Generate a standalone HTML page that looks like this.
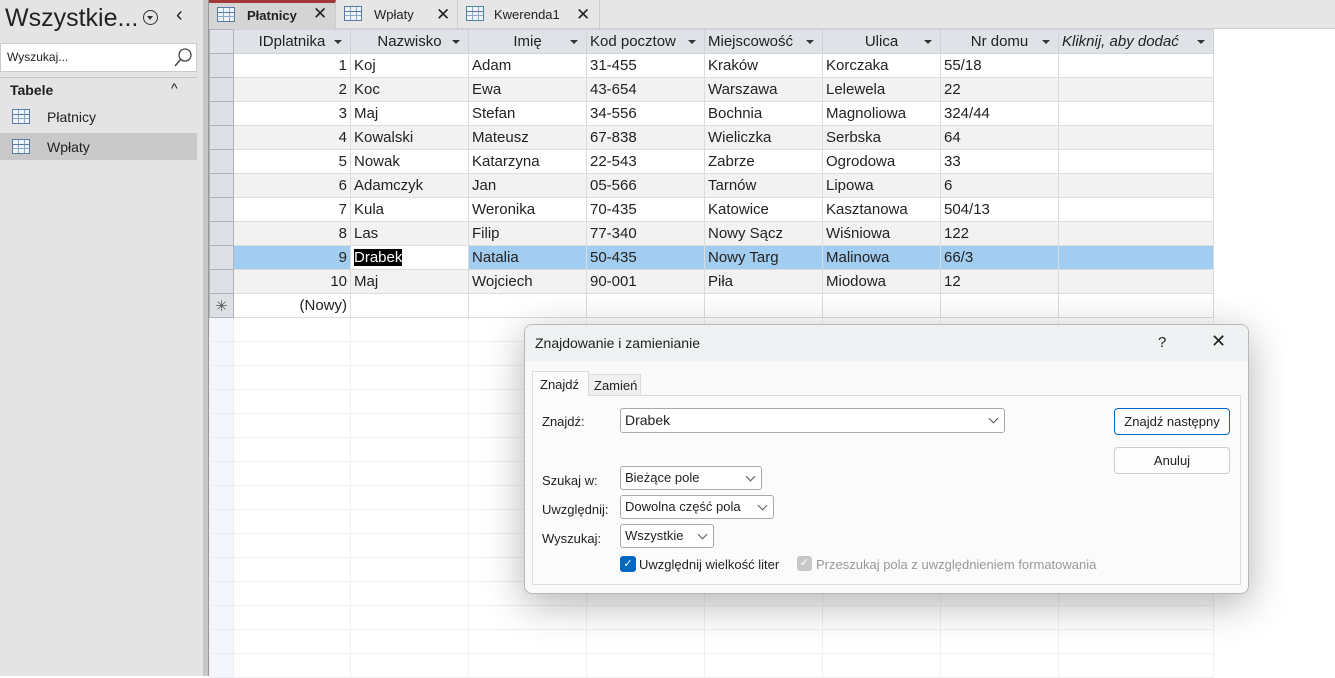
<!DOCTYPE html>
<html><head><meta charset="utf-8"><style>
*{box-sizing:border-box;margin:0;padding:0}
body{width:1335px;height:676px;overflow:hidden;background:#fff;font-family:"Liberation Sans",sans-serif;position:relative;color:#222}
.a{position:absolute}
#left{left:0;top:0;width:203px;height:676px;background:#e4e4e4}
#split{left:203px;top:0;width:6px;height:676px;background:#c8c8c8;border-right:1px solid #999}
#tabs{left:209px;top:0;width:1126px;height:29px;background:#e6e6e6;border-bottom:1px solid #d0d0d0}
.tab{position:absolute;top:0;height:29px;font-size:13px;line-height:29px;border-right:1px solid #ccc}
.ti{position:absolute;left:8px;top:6px;width:18px;height:15px;border:1px solid #5a7aa8;background:
linear-gradient(#5a7aa8,#5a7aa8) 0 4px/100% 1px no-repeat,
linear-gradient(#8fa8c8,#8fa8c8) 0 8px/100% 1px no-repeat,
linear-gradient(90deg,transparent 5px,#8fa8c8 5px,#8fa8c8 6px,transparent 6px,transparent 11px,#8fa8c8 11px,#8fa8c8 12px,transparent 12px),#eef3fa}
.x{position:absolute;font-size:17px;top:0}
table{position:absolute;left:209px;top:29px;border-collapse:collapse;table-layout:fixed;font-size:15px}
td{height:24px;border:1px solid #dcdcdc;padding:0 3px;white-space:nowrap;overflow:hidden}
tr.h td{background:#dfe3e8;text-align:center;position:relative;border-color:#cfd3d8}
tr.h td i.d{position:absolute;right:8px;top:10px;border:4px solid transparent;border-top:4px solid #333;border-bottom:0}
tr.e td{background:#f2f2f2}
tr.sel td{background:#a3cdf0}
tr.z td{border-color:#f0f0f3}
tr td.s{background:#dde0e5;border-color:#b0b4ba;padding:0}
tr.z td.s{background:#f5f6fc;border-color:#ebecf2}
td.r{text-align:right}
#dlg{left:524px;top:324px;width:725px;height:270px;border:1px solid #b8b8b8;border-radius:8px;background:#f9f9f9;box-shadow:0 10px 40px rgba(0,0,0,.3);overflow:hidden;font-size:13px}
.sel2{position:absolute;background:#fff;border:1px solid #aaa;border-radius:3px;height:24px;line-height:22px;padding-left:4px;font-size:13px}
.sel2 b{position:absolute;right:7px;top:6px;width:7px;height:7px;border-right:1px solid #555;border-bottom:1px solid #555;transform:rotate(45deg)}
.btn{position:absolute;left:589px;width:116px;height:27px;border:1px solid #ccc;border-radius:4px;background:#fdfdfd;text-align:center;line-height:25px}
.lbl{position:absolute;left:17px}
</style></head><body>
<div id="left" class="a">
<div class="a" style="left:5px;top:4px;font-size:25px;color:#222">Wszystkie...</div>
<div class="a" style="left:143px;top:10px;width:15px;height:15px;border:1px solid #333;border-radius:50%"><div class="a" style="left:3px;top:5px;border:3px solid transparent;border-top:4px solid #333;border-bottom:0"></div></div>
<div class="a" style="left:176px;top:4px;font-size:20px">‹</div>
<div class="a" style="left:0;top:43px;width:197px;height:29px;background:#fff;border:1px solid #ccc;font-size:12px;line-height:27px;padding-left:6px">Wyszukaj...</div>
<svg class="a" style="left:172px;top:47px" width="22" height="22"><circle cx="13" cy="8" r="6" fill="none" stroke="#444" stroke-width="1.3"/><path d="M9 12L3 19" stroke="#444" stroke-width="1.5"/></svg>
<div class="a" style="left:0;top:77px;width:197px;border-top:1px solid #c4c4c4"></div>
<div class="a" style="left:10px;top:82px;font-size:14px;font-weight:bold">Tabele</div>
<div class="a" style="left:171px;top:80px;font-size:14px">^</div>
<div class="a" style="left:0;top:133px;width:197px;height:27px;background:#c9c9c9"></div>
<div class="a ti" style="left:12px;top:109px"></div>
<div class="a" style="left:47px;top:109px;font-size:14px">Płatnicy</div>
<div class="a ti" style="left:12px;top:139px"></div>
<div class="a" style="left:47px;top:139px;font-size:14px">Wpłaty</div>
</div>
<div id="split" class="a"></div>
<div id="tabs" class="a">
<div class="tab" style="left:0;width:127px;background:#d5d5d5;border-top:3px solid #a4373a;line-height:25px"><span class="ti" style="top:4px"></span><b style="position:absolute;left:38px">Płatnicy</b><span class="x" style="left:104px;top:-2px">✕</span></div>
<div class="tab" style="left:127px;width:122px"><span class="ti"></span><span style="position:absolute;left:38px">Wpłaty</span><span class="x" style="left:100px">✕</span></div>
<div class="tab" style="left:249px;width:142px"><span class="ti" style="border-color:#4a8a9a"></span><span style="position:absolute;left:36px">Kwerenda1</span><span class="x" style="left:118px">✕</span></div>
</div>
<table>
<colgroup><col style="width:24px"><col style="width:117px"><col style="width:118px"><col style="width:118px"><col style="width:118px"><col style="width:118px"><col style="width:118px"><col style="width:118px"><col style="width:155px"></colgroup>
<tr class="h"><td class="s" style="background:#dfe3e8"></td><td>IDplatnika<i class="d"></i></td><td>Nazwisko<i class="d"></i></td><td>Imię<i class="d"></i></td><td style="text-align:left">Kod pocztow<i class="d"></i></td><td style="text-align:left">Miejscowość<i class="d"></i></td><td>Ulica<i class="d"></i></td><td>Nr domu<i class="d"></i></td><td style="text-align:left;font-style:italic">Kliknij, aby dodać<i class="d"></i></td></tr>
<tr><td class="s"></td><td class="r">1</td><td>Koj</td><td>Adam</td><td>31-455</td><td>Kraków</td><td>Korczaka</td><td>55/18</td><td></td></tr>
<tr class="e"><td class="s"></td><td class="r">2</td><td>Koc</td><td>Ewa</td><td>43-654</td><td>Warszawa</td><td>Lelewela</td><td>22</td><td></td></tr>
<tr><td class="s"></td><td class="r">3</td><td>Maj</td><td>Stefan</td><td>34-556</td><td>Bochnia</td><td>Magnoliowa</td><td>324/44</td><td></td></tr>
<tr class="e"><td class="s"></td><td class="r">4</td><td>Kowalski</td><td>Mateusz</td><td>67-838</td><td>Wieliczka</td><td>Serbska</td><td>64</td><td></td></tr>
<tr><td class="s"></td><td class="r">5</td><td>Nowak</td><td>Katarzyna</td><td>22-543</td><td>Zabrze</td><td>Ogrodowa</td><td>33</td><td></td></tr>
<tr class="e"><td class="s"></td><td class="r">6</td><td>Adamczyk</td><td>Jan</td><td>05-566</td><td>Tarnów</td><td>Lipowa</td><td>6</td><td></td></tr>
<tr><td class="s"></td><td class="r">7</td><td>Kula</td><td>Weronika</td><td>70-435</td><td>Katowice</td><td>Kasztanowa</td><td>504/13</td><td></td></tr>
<tr class="e"><td class="s"></td><td class="r">8</td><td>Las</td><td>Filip</td><td>77-340</td><td>Nowy Sącz</td><td>Wiśniowa</td><td>122</td><td></td></tr>
<tr class="sel"><td class="s"></td><td class="r">9</td><td style="background:#fff"><span style="background:#000;color:#fff">Drabek</span></td><td>Natalia</td><td>50-435</td><td>Nowy Targ</td><td>Malinowa</td><td>66/3</td><td></td></tr>
<tr class="e"><td class="s"></td><td class="r">10</td><td>Maj</td><td>Wojciech</td><td>90-001</td><td>Piła</td><td>Miodowa</td><td>12</td><td></td></tr>
<tr><td class="s" style="text-align:center;color:#555">✳</td><td class="r">(Nowy)</td><td></td><td></td><td></td><td></td><td></td><td></td><td></td></tr>
<tr class="z"><td class="s"></td><td></td><td></td><td></td><td></td><td></td><td></td><td></td><td></td></tr>
<tr class="z"><td class="s"></td><td></td><td></td><td></td><td></td><td></td><td></td><td></td><td></td></tr>
<tr class="z"><td class="s"></td><td></td><td></td><td></td><td></td><td></td><td></td><td></td><td></td></tr>
<tr class="z"><td class="s"></td><td></td><td></td><td></td><td></td><td></td><td></td><td></td><td></td></tr>
<tr class="z"><td class="s"></td><td></td><td></td><td></td><td></td><td></td><td></td><td></td><td></td></tr>
<tr class="z"><td class="s"></td><td></td><td></td><td></td><td></td><td></td><td></td><td></td><td></td></tr>
<tr class="z"><td class="s"></td><td></td><td></td><td></td><td></td><td></td><td></td><td></td><td></td></tr>
<tr class="z"><td class="s"></td><td></td><td></td><td></td><td></td><td></td><td></td><td></td><td></td></tr>
<tr class="z"><td class="s"></td><td></td><td></td><td></td><td></td><td></td><td></td><td></td><td></td></tr>
<tr class="z"><td class="s"></td><td></td><td></td><td></td><td></td><td></td><td></td><td></td><td></td></tr>
<tr class="z"><td class="s"></td><td></td><td></td><td></td><td></td><td></td><td></td><td></td><td></td></tr>
<tr class="z"><td class="s"></td><td></td><td></td><td></td><td></td><td></td><td></td><td></td><td></td></tr>
<tr class="z"><td class="s"></td><td></td><td></td><td></td><td></td><td></td><td></td><td></td><td></td></tr>
<tr class="z"><td class="s"></td><td></td><td></td><td></td><td></td><td></td><td></td><td></td><td></td></tr>
<tr class="z"><td class="s"></td><td></td><td></td><td></td><td></td><td></td><td></td><td></td><td></td></tr>
</table>
<div id="dlg" class="a">
<div class="a" style="left:0;top:0;width:725px;height:36px;background:#eef2f2"></div>
<div class="a" style="left:10px;top:10px;font-size:14px">Znajdowanie i zamienianie</div>
<div class="a" style="left:633px;top:9px;font-size:15px">?</div>
<div class="a" style="left:686px;top:6px;font-size:18px">✕</div>
<div class="a" style="left:7px;top:70px;width:709px;height:190px;border:1px solid #dcdcdc;background:#fbfbfb"></div>
<div class="a" style="left:7px;top:46px;width:57px;height:25px;border:1px solid #dcdcdc;border-bottom:none;background:#fbfbfb;padding:5px 0 0 7px">Znajdź</div>
<div class="a" style="left:63px;top:49px;width:53px;height:21px;border:1px solid #dcdcdc;border-bottom:none;background:#f0f0f0;padding:3px 0 0 5px">Zamień</div>
<div class="lbl" style="top:89px">Znajdź:</div>
<div class="sel2" style="left:95px;top:83px;width:385px;height:25px;line-height:23px;font-size:14px">Drabek<b></b></div>
<div class="btn" style="top:83px;border-color:#0067c0">Znajdź następny</div>
<div class="btn" style="top:122px">Anuluj</div>
<div class="lbl" style="top:148px">Szukaj w:</div>
<div class="sel2" style="left:95px;top:141px;width:142px">Bieżące pole<b></b></div>
<div class="lbl" style="top:177px">Uwzględnij:</div>
<div class="sel2" style="left:95px;top:170px;width:154px">Dowolna część pola<b></b></div>
<div class="lbl" style="top:206px">Wyszukaj:</div>
<div class="sel2" style="left:95px;top:199px;width:94px">Wszystkie<b></b></div>
<div class="a" style="left:95px;top:231px;width:16px;height:16px;background:#0067c0;border-radius:3px;color:#fff;font-size:11px;text-align:center;line-height:16px">✓</div>
<div class="a" style="left:114px;top:232px">Uwzględnij wielkość liter</div>
<div class="a" style="left:272px;top:231px;width:15px;height:15px;background:#c8c8c8;border-radius:3px;color:#fff;font-size:11px;text-align:center;line-height:15px">✓</div>
<div class="a" style="left:291px;top:232px;color:#999">Przeszukaj pola z uwzględnieniem formatowania</div>
</div>
</body></html>
